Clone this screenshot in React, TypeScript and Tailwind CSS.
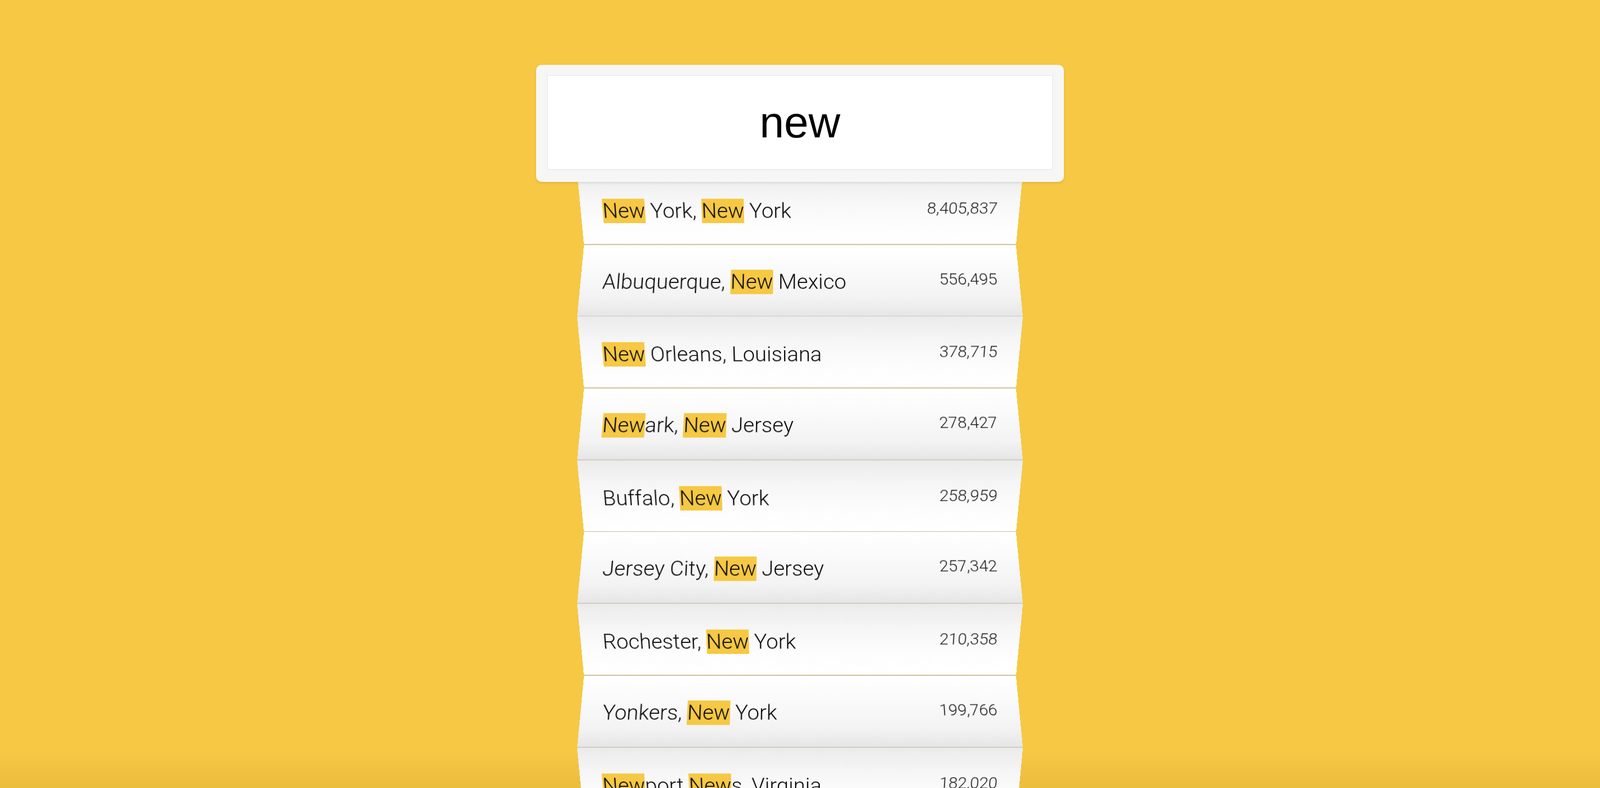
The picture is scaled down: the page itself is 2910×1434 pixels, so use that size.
import React from "react";

type City = { name: string; pop: string };

const cities: City[] = [
  { name: "New York, New York", pop: "8,405,837" },
  { name: "Albuquerque, New Mexico", pop: "556,495" },
  { name: "New Orleans, Louisiana", pop: "378,715" },
  { name: "Newark, New Jersey", pop: "278,427" },
  { name: "Buffalo, New York", pop: "258,959" },
  { name: "Jersey City, New Jersey", pop: "257,342" },
  { name: "Rochester, New York", pop: "210,358" },
  { name: "Yonkers, New York", pop: "199,766" },
  { name: "Newport News, Virginia", pop: "182,020" },
  { name: "New Haven, Connecticut", pop: "130,660" },
];

function Highlight({ text }: { text: string }) {
  const parts = text.split(/(new)/i);
  return (
    <>
      {parts.map((p, i) =>
        p.toLowerCase() === "new" ? (
          <span key={i} className="bg-[#f6c843]">
            {p}
          </span>
        ) : (
          <span key={i}>{p}</span>
        )
      )}
    </>
  );
}

function Row({ city, index }: { city: City; index: number }) {
  const topFront = index % 2 === 0;
  return (
    <div className="h-[130.7px] w-[798px] shrink-0 flex items-center">
      <div
        className={
          topFront
            ? "h-[135.3px] w-full shrink-0 flex items-center justify-between px-[40px] [transform:translateY(1.02px)_perspective(1130px)_rotateX(-15deg)] bg-[linear-gradient(to_bottom,#ebebeb_0px,#f6f6f6_45px,#fdfdfd_95px,#ffffff_calc(100%_-_2px),#c9c6a5_calc(100%_-_2px))]"
            : "h-[135.3px] w-full shrink-0 flex items-center justify-between px-[40px] [transform:translateY(-1.01px)_perspective(1130px)_rotateX(15deg)] bg-[linear-gradient(to_bottom,#ffffff_0px,#fbfbfb_40px,#f3f3f3_100px,#e6e6e6_calc(100%_-_2px),#cfcfcf_calc(100%_-_2px))]"
        }
      >
        <div className="mt-[5px] text-[39px] font-light text-[#0a0a0a] whitespace-nowrap leading-[1.2]">
          <Highlight text={city.name} />
        </div>
        <div className="text-[30px] font-light text-[#1a1a1a] mb-[6px] whitespace-nowrap">
          {city.pop}
        </div>
      </div>
    </div>
  );
}

export default function App() {
  return (
    <div className="relative h-screen w-full overflow-hidden bg-[#f6c844] flex flex-col items-center pt-[118px] [font-family:Roboto,'Noto_Sans',sans-serif]">
      <div className="pointer-events-none absolute inset-x-0 bottom-0 h-[70px] bg-[linear-gradient(to_bottom,rgba(140,90,0,0)_0%,rgba(140,90,0,0.10)_100%)]" />
      <div className="relative z-10 shrink-0 w-[960px] h-[213px] rounded-[10px] bg-[#f6f6f6] pt-[19px] pb-[22px] px-[20px] shadow-[0_2px_5px_rgba(0,0,0,0.10)]">
        <div className="h-full w-full bg-white border border-[#e4e4e4] flex items-center justify-center">
          <span className="text-[80px] text-black [font-family:'Liberation_Sans',Arial,sans-serif]">
            new
          </span>
        </div>
      </div>
      <div className="-mt-[15.7px] shrink-0 flex flex-col items-center">
        {cities.map((c, i) => (
          <Row key={c.name} city={c} index={i} />
        ))}
      </div>
    </div>
  );
}
